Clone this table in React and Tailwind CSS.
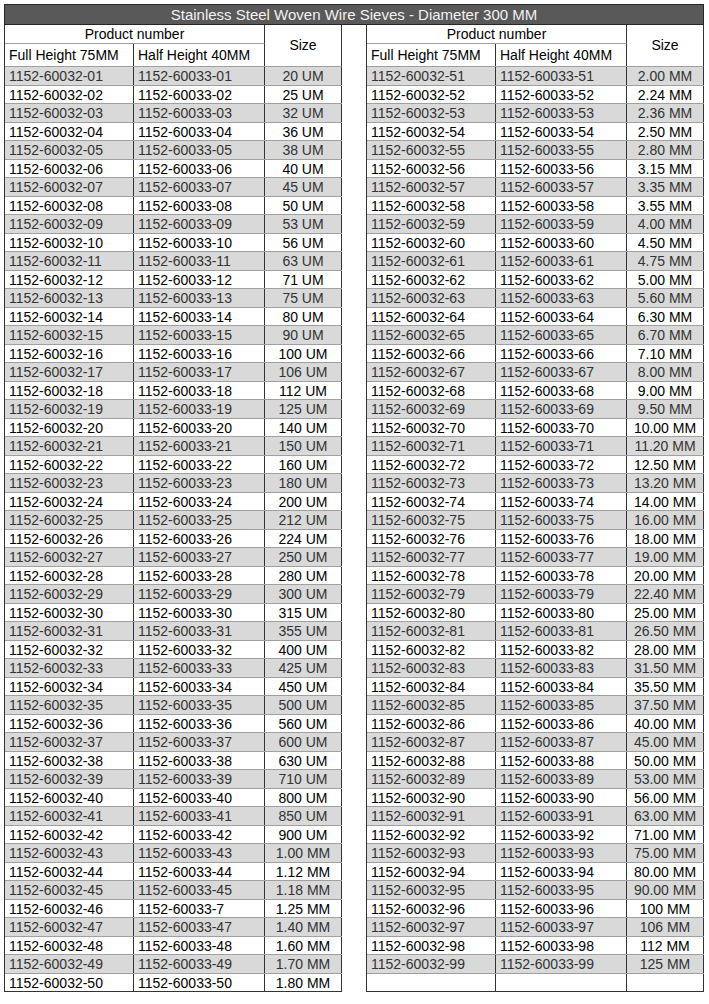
import React from "react";

const leftSizes = [
  "20 UM", "25 UM", "32 UM", "36 UM", "38 UM", "40 UM", "45 UM", "50 UM", "53 UM", "56 UM",
  "63 UM", "71 UM", "75 UM", "80 UM", "90 UM", "100 UM", "106 UM", "112 UM", "125 UM", "140 UM",
  "150 UM", "160 UM", "180 UM", "200 UM", "212 UM", "224 UM", "250 UM", "280 UM", "300 UM", "315 UM",
  "355 UM", "400 UM", "425 UM", "450 UM", "500 UM", "560 UM", "600 UM", "630 UM", "710 UM", "800 UM",
  "850 UM", "900 UM", "1.00 MM", "1.12 MM", "1.18 MM", "1.25 MM", "1.40 MM", "1.60 MM", "1.70 MM", "1.80 MM",
];

const rightSizes = [
  "2.00 MM", "2.24 MM", "2.36 MM", "2.50 MM", "2.80 MM", "3.15 MM", "3.35 MM", "3.55 MM", "4.00 MM", "4.50 MM",
  "4.75 MM", "5.00 MM", "5.60 MM", "6.30 MM", "6.70 MM", "7.10 MM", "8.00 MM", "9.00 MM", "9.50 MM", "10.00 MM",
  "11.20 MM", "12.50 MM", "13.20 MM", "14.00 MM", "16.00 MM", "18.00 MM", "19.00 MM", "20.00 MM", "22.40 MM", "25.00 MM",
  "26.50 MM", "28.00 MM", "31.50 MM", "35.50 MM", "37.50 MM", "40.00 MM", "45.00 MM", "50.00 MM", "53.00 MM", "56.00 MM",
  "63.00 MM", "71.00 MM", "75.00 MM", "80.00 MM", "90.00 MM", "100 MM", "106 MM", "112 MM", "125 MM",
];

const pad = (n) => String(n).padStart(2, "0");

const leftRows = leftSizes.map((size, i) => {
  const n = pad(i + 1);
  return {
    full: `1152-60032-${n}`,
    half: i + 1 === 46 ? "1152-60033-7" : `1152-60033-${n}`,
    size,
  };
});

const rightRows = [
  ...rightSizes.map((size, i) => {
    const n = pad(i + 51);
    return { full: `1152-60032-${n}`, half: `1152-60033-${n}`, size };
  }),
  { full: "", half: "", size: "" },
];

function SieveTable({ rows }) {
  return (
    <div className="w-[338px] border-l border-[#333]">
      {/* header */}
      <div className="flex">
        <div className="w-[260px]">
          <div className="h-[19px] border-b border-r border-b-[#a0a0a0] border-r-[#333] text-center leading-[18px]">
            Product number
          </div>
          <div className="flex h-[23px] border-b border-[#a0a0a0]">
            <div className="w-[129px] border-r border-[#333] pl-[4px] leading-[22px]">Full Height 75MM</div>
            <div className="w-[131px] border-r border-[#333] pl-[4px] leading-[22px]">Half Height 40MM</div>
          </div>
        </div>
        <div className="w-[77px] h-[42px] border-r border-b border-r-[#333] border-b-[#a0a0a0] flex items-center justify-center">
          Size
        </div>
      </div>

      {/* data rows */}
      {rows.map((r, i) => {
        const gray = i % 2 === 0;
        const last = i === rows.length - 1;
        return (
          <div
            key={i}
            className={`flex h-[18.5px] border-b ${last ? "border-[#333]" : "border-[#a0a0a0]"} ${
              gray ? "bg-[#d9d9d9] text-[#333]" : "bg-white text-black"
            }`}
          >
            <div className="w-[129px] border-r border-[#333] pl-[4px] leading-[18px] whitespace-nowrap">{r.full}</div>
            <div className="w-[131px] border-r border-[#333] pl-[4px] leading-[18px] whitespace-nowrap">{r.half}</div>
            <div className="w-[77px] border-r border-[#333] text-center leading-[18px] whitespace-nowrap">{r.size}</div>
          </div>
        );
      })}
    </div>
  );
}

export default function App() {
  return (
    <div
      className="w-[709px] h-[1004px] bg-white pt-[4px] pl-[4px] text-[14px] text-black"
      style={{ fontFamily: '"Liberation Sans", Arial, sans-serif' }}
    >
      <div className="w-[700px] h-[21px] border border-[#262626] bg-[#595959] text-[#f2f2f2] text-center text-[15px] leading-[19px]">
        Stainless Steel Woven Wire Sieves - Diameter 300 MM
      </div>
      <div className="flex gap-[24px]">
        <SieveTable rows={leftRows} />
        <SieveTable rows={rightRows} />
      </div>
    </div>
  );
}
